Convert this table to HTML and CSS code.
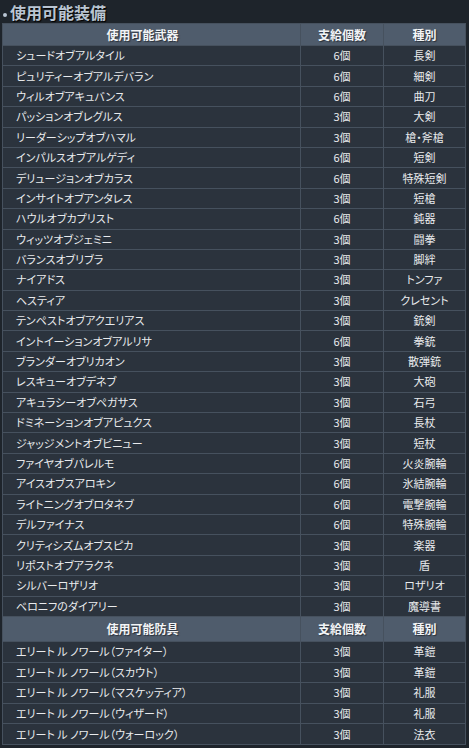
FILE: index.html
```html
<!DOCTYPE html>
<html lang="ja">
<head>
<meta charset="utf-8">
<link rel="stylesheet" href="styles.css">
</head>
<body>
<h2 class="title"><span class="dot"></span>使用可能装備</h2>
<table class="equip">
<colgroup><col class="c-name"><col class="c-qty"><col class="c-type"></colgroup>
<thead>
<tr class="head"><th class="h-name">使用可能武器</th><th>支給個数</th><th>種別</th></tr>
</thead>
<tbody class="weapons">
<tr><td class="name">シュードオブアルタイル</td><td>6個</td><td>長剣</td></tr>
<tr><td class="name">ピュリティーオブアルデバラン</td><td>6個</td><td>細剣</td></tr>
<tr><td class="name">ウィルオブアキュバンス</td><td>6個</td><td>曲刀</td></tr>
<tr><td class="name">パッションオブレグルス</td><td>3個</td><td>大剣</td></tr>
<tr><td class="name">リーダーシップオブハマル</td><td>3個</td><td>槍・斧槍</td></tr>
<tr><td class="name">インパルスオブアルゲディ</td><td>6個</td><td>短剣</td></tr>
<tr><td class="name">デリュージョンオブカラス</td><td>6個</td><td>特殊短剣</td></tr>
<tr><td class="name">インサイトオブアンタレス</td><td>3個</td><td>短槍</td></tr>
<tr><td class="name">ハウルオブカプリスト</td><td>6個</td><td>鈍器</td></tr>
<tr><td class="name">ウィッツオブジェミニ</td><td>3個</td><td>闘拳</td></tr>
<tr><td class="name">バランスオブリブラ</td><td>3個</td><td>脚絆</td></tr>
<tr><td class="name">ナイアドス</td><td>3個</td><td>トンファ</td></tr>
<tr><td class="name">ヘスティア</td><td>3個</td><td>クレセント</td></tr>
<tr><td class="name">テンペストオブアクエリアス</td><td>3個</td><td>銃剣</td></tr>
<tr><td class="name">イントイーションオブアルリサ</td><td>6個</td><td>拳銃</td></tr>
<tr><td class="name">ブランダーオブリカオン</td><td>3個</td><td>散弾銃</td></tr>
<tr><td class="name">レスキューオブデネブ</td><td>3個</td><td>大砲</td></tr>
<tr><td class="name">アキュラシーオブペガサス</td><td>3個</td><td>石弓</td></tr>
<tr><td class="name">ドミネーションオブアピュクス</td><td>3個</td><td>長杖</td></tr>
<tr><td class="name">ジャッジメントオブビニュー</td><td>3個</td><td>短杖</td></tr>
<tr><td class="name">ファイヤオブパレルモ</td><td>6個</td><td>火炎腕輪</td></tr>
<tr><td class="name">アイスオブスアロキン</td><td>6個</td><td>氷結腕輪</td></tr>
<tr><td class="name">ライトニングオブロタネブ</td><td>6個</td><td>電撃腕輪</td></tr>
<tr><td class="name">デルファイナス</td><td>6個</td><td>特殊腕輪</td></tr>
<tr><td class="name">クリティシズムオブスピカ</td><td>3個</td><td>楽器</td></tr>
<tr><td class="name">リポストオブアラクネ</td><td>3個</td><td>盾</td></tr>
<tr><td class="name">シルバーロザリオ</td><td>3個</td><td>ロザリオ</td></tr>
<tr><td class="name">ベロニフのダイアリー</td><td>3個</td><td>魔導書</td></tr>
</tbody>
<tbody class="armor">
<tr class="head head2"><th class="h-name">使用可能防具</th><th>支給個数</th><th>種別</th></tr>
<tr><td class="name">エリート ル ノワール（ファイター）</td><td>3個</td><td>革鎧</td></tr>
<tr><td class="name">エリート ル ノワール（スカウト）</td><td>3個</td><td>革鎧</td></tr>
<tr><td class="name">エリート ル ノワール（マスケッティア）</td><td>3個</td><td>礼服</td></tr>
<tr><td class="name">エリート ル ノワール（ウィザード）</td><td>3個</td><td>礼服</td></tr>
<tr><td class="name">エリート ル ノワール（ウォーロック）</td><td>3個</td><td>法衣</td></tr>
</tbody>
</table>
</body>
</html>
```
FILE: styles.css
```css
html, body {
  margin: 0;
  padding: 0;
  background: #1e242b;
}
body {
  font-family: "Noto Sans CJK JP", "Noto Sans", sans-serif;
  color: #e6e8ea;
  padding: 0 4px 0 2px;
}
.title {
  margin: 0;
  height: 23px;
  display: flex;
  align-items: center;
  gap: 3px;
  font-size: 16px;
  font-weight: bold;
  line-height: 1;
  color: #b9c5d3;
  text-shadow: 1px 1px 1px #000;
  padding-left: 1px;
  letter-spacing: 0;
}
.dot {
  width: 4px;
  height: 4px;
  border-radius: 50%;
  background: #b9c5d3;
  margin-top: 6px;
}
.equip {
  width: 463px;
  border-collapse: collapse;
  background: #2b333d;
  border: 1px solid #4a5664;
  table-layout: fixed;
}
.c-name { width: 298px; }
.c-qty { width: 83px; }
.c-type { width: 82px; }
.equip td, .equip th {
  border: 1px solid #46515e;
  padding: 0;
  text-align: center;
  font-size: 11px;
  line-height: 1;
  white-space: nowrap;
  font-feature-settings: "palt";
}
.equip td {
  height: 19.4px;
  color: #e9ebed;
}
.equip td.name {
  text-align: left;
  padding-left: 13px;
}
.head th {
  background: #4f5c6c;
  height: 21px;
  font-size: 12px;
  font-weight: bold;
  color: #f2f4f6;
  text-shadow: 1px 1px 1px #2a313a;
}
.head2 th {
  height: 24px;
}
.head .h-name {
  padding-right: 18px;
}
.armor td {
  height: 19.6px;
}
```
